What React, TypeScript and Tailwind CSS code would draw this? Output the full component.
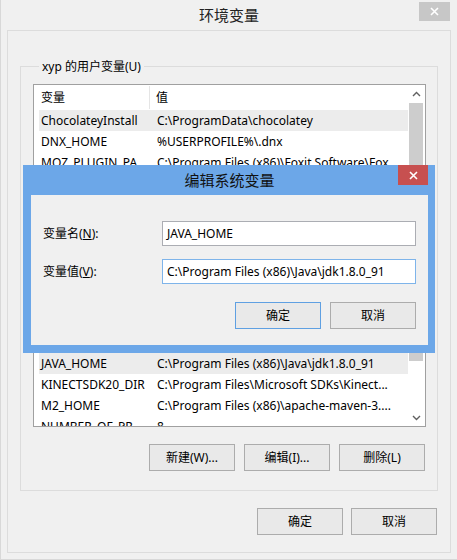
import React from 'react';

type EnvVar = { name: string; value: string; selected?: boolean };

// rows visible above the edit dialog
const topVars: EnvVar[] = [
  { name: 'ChocolateyInstall', value: 'C:\\ProgramData\\chocolatey', selected: true },
  { name: 'DNX_HOME', value: '%USERPROFILE%\\.dnx' },
  { name: 'MOZ_PLUGIN_PATH', value: 'C:\\Program Files (x86)\\Foxit Software\\Foxit Reader\\plugins\\' },
];

// rows visible below the edit dialog
const bottomVars: EnvVar[] = [
  { name: 'JAVA_HOME', value: 'C:\\Program Files (x86)\\Java\\jdk1.8.0_91', selected: true },
  { name: 'KINECTSDK20_DIR', value: 'C:\\Program Files\\Microsoft SDKs\\Kinect...' },
  { name: 'M2_HOME', value: 'C:\\Program Files (x86)\\apache-maven-3....' },
  { name: 'NUMBER_OF_PROCESSORS', value: '8' },
];

function Chevron({ up }: { up?: boolean }) {
  return (
    <svg width="9" height="6" viewBox="0 0 9 6" className="text-[#606060]">
      <path d={up ? 'M1 5L4.5 1.5L8 5' : 'M1 1L4.5 4.5L8 1'} fill="none" stroke="currentColor" strokeWidth="1.4" />
    </svg>
  );
}

function CloseGlyph() {
  return (
    <svg width="9" height="9" viewBox="0 0 9 9">
      <path d="M1 1L8 8M8 1L1 8" stroke="white" strokeWidth="1.6" />
    </svg>
  );
}

function VarRow({ v }: { v: EnvVar }) {
  return (
    <div className={`flex h-[21px] items-center ${v.selected ? 'bg-[#ececec]' : ''}`}>
      <div className="w-[111px] shrink-0 truncate pl-[2px] pr-[2px]">{v.name}</div>
      <div className="min-w-0 flex-1 truncate pl-[7px] pr-[8px]">{v.value}</div>
    </div>
  );
}

function WinButton({ label, primary }: { label: React.ReactNode; primary?: boolean }) {
  return (
    <button
      type="button"
      className={`flex h-[27px] w-[86px] items-center justify-center border bg-[#e9e9e9] text-[12px] text-black ${
        primary ? 'border-[#5fa0e2]' : 'border-[#acacac]'
      }`}
    >
      {label}
    </button>
  );
}

export default function App() {
  return (
    <div className="relative flex h-[560px] w-[457px] flex-col overflow-hidden border-b border-l border-[#d8d8d8] bg-[#f0f0f0] font-['Noto_Sans','Noto_Sans_CJK_SC',sans-serif] text-[12px] text-black">
      {/* window title bar */}
      <div className="relative flex h-[30px] shrink-0 items-center justify-center">
        <span className="text-[15px] text-[#222]">环境变量</span>
        <div className="absolute right-[7px] top-[2px] flex h-[19px] w-[31px] items-center justify-center bg-[#c7c7c7]">
          <CloseGlyph />
        </div>
      </div>

      <div className="mb-[6px] ml-[6px] mr-[6px] flex flex-1 flex-col border border-[#dcdcdc] pt-[27px]">
        <fieldset className="mx-[12px] border border-[#dcdcdc] pb-[19px] pl-[12px]">
          <legend className="ml-[6px] px-[3px] leading-[17px]">xyp 的用户变量(U)</legend>

          <div className="mt-[9px] flex h-[343px] w-[393px] border border-[#a0a0a0] bg-white">
            <div className="flex min-w-0 flex-1 flex-col overflow-hidden">
              <div className="flex h-[25px] shrink-0 items-center">
                <div className="flex h-[23px] w-[116px] items-center border-r border-[#e5e5e5] pl-[7px]">变量</div>
                <div className="pl-[6px]">值</div>
              </div>
              <div className="flex flex-col pl-[5px]">
                {topVars.map((v) => (
                  <VarRow key={v.name} v={v} />
                ))}
                {/* covered by the edit dialog */}
                <div className="h-[180px]" />
                {bottomVars.map((v) => (
                  <VarRow key={v.name} v={v} />
                ))}
              </div>
            </div>
            <div className="flex w-[17px] shrink-0 flex-col">
              <div className="flex h-[17px] items-center justify-center">
                <Chevron up />
              </div>
              <div className="ml-[1px] mt-[1px] h-[258px] w-[14px] bg-[#cdcdcd]" />
              <div className="flex-1" />
              <div className="flex h-[17px] items-center justify-center">
                <Chevron />
              </div>
            </div>
          </div>

          <div className="mt-[17px] flex w-[392px] justify-end gap-[9px]">
            <WinButton label="新建(W)..." />
            <WinButton label="编辑(I)..." />
            <WinButton label="删除(L)" />
          </div>
        </fieldset>

        <div className="mt-[17px] flex justify-end gap-[8px] pr-[13px]">
          <WinButton label="确定" />
          <WinButton label="取消" />
        </div>
      </div>

      {/* edit dialog on top */}
      <div className="absolute left-[22px] top-[165px] flex w-[412px] flex-col bg-[#6ca7e8] pb-[8px] pl-[8px] pr-[7px]">
        <div className="relative flex h-[30px] items-center justify-center">
          <span className="text-[15px] text-[#111]">编辑系统变量</span>
          <div className="absolute right-0 top-0 flex h-[20px] w-[30px] items-center justify-center bg-[#c75050]">
            <CloseGlyph />
          </div>
        </div>
        <div className="flex flex-col bg-[#f0f0f0] px-[12px] pb-[16px] pt-[26px]">
          <div className="flex items-center justify-between">
            <span>
              变量名(<span className="underline">N</span>):
            </span>
            <div className="flex h-[25px] w-[254px] items-center border border-[#abadb3] bg-white pl-[4px]">JAVA_HOME</div>
          </div>
          <div className="mt-[13px] flex items-center justify-between">
            <span>
              变量值(<span className="underline">V</span>):
            </span>
            <div className="flex h-[25px] w-[254px] items-center border border-[#7eb4ea] bg-white pl-[4px]">
              C:\Program Files (x86)\Java\jdk1.8.0_91
            </div>
          </div>
          <div className="mt-[18px] flex justify-end gap-[9px]">
            <WinButton label="确定" primary />
            <WinButton label="取消" />
          </div>
        </div>
      </div>
    </div>
  );
}
